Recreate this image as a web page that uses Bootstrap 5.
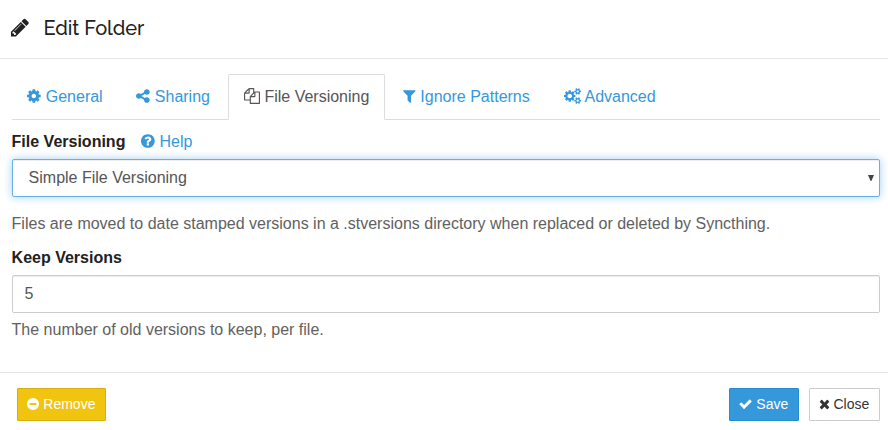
<!DOCTYPE html>
<html lang="en">
<head>
<meta charset="utf-8">
<meta name="viewport" content="width=device-width, initial-scale=1">
<title>Edit Folder</title>
<link href="https://cdn.jsdelivr.net/npm/bootstrap@5.3.0/dist/css/bootstrap.min.css" rel="stylesheet">
<style>
body{font:16px/22px "Liberation Sans",Arial,sans-serif;color:#212121;background:#fff;overflow:hidden}
.ico{height:1em;width:auto;vertical-align:-.143em;fill:currentColor;overflow:visible}
.dialog-head{height:59px;border-bottom:1px solid #e5e5e5;padding:0 12px 3px 11px}
.dialog-head h1{font:500 20px/24px Raleway,Lato,sans-serif;letter-spacing:-.08px;margin:0 0 0 14.5px}
.dialog-head .ico{font-size:21px}
.dialog-main{height:313px;padding:15px 8px 0 11.6px}
.nav-tabs{--bs-nav-tabs-border-color:#ddd;margin-bottom:11px;gap:2px}
.nav-tabs .nav-link{padding:11px 15px;line-height:22px;color:#3498db;border-radius:2px 2px 0 0;white-space:nowrap}
.nav-tabs .nav-link.active{color:#555;border-color:#ddd #ddd #fff}
.nav-tabs .ico-snug{margin-left:-.2px;margin-right:.2px}
.field-label{font-weight:700;line-height:22px}
.field-row{margin-bottom:6px}
.help-link{color:#3498db;margin-left:16px}
.form-select,.form-control{height:38px;border:1px solid #ccc;border-radius:2px;color:#555;font-size:16px;line-height:22px;padding:7px 12px;box-shadow:inset 0 1px 1px rgba(0,0,0,.075)}
.form-select{padding-left:16px;border-color:#66afe9;box-shadow:inset 0 1px 1px rgba(0,0,0,.075),0 0 8px rgba(102,175,233,.6);background-image:url("data:image/svg+xml,%3Csvg xmlns='http://www.w3.org/2000/svg' viewBox='0 0 6 6'%3E%3Cpath fill='%23444' d='M0 0h6L3.4 6h-.8z'/%3E%3C/svg%3E");background-size:6px 6px;background-position:right 5px center}
.form-select:focus{border-color:#66afe9}
.hint{color:#616161}
.keep-label{margin:12px 0 6px}
.keep-hint{margin:6px 0 0}
.dialog-foot{height:58px;border-top:1px solid #e5e5e5;padding:15px 8px 0 17px}
.btn{height:33px;border-radius:1px;font-size:14px;line-height:21px;padding:5px 9px;white-space:nowrap}
.btn-remove,.btn-remove:hover{background:#f1c40f;border-color:#d8b00d;color:#fff;padding-left:9.4px;padding-right:10px}
.btn-save,.btn-save:hover{background:#3498db;border-color:#258cd1;color:#fff;padding-left:9.5px;padding-right:9.7px}
.btn-dismiss,.btn-dismiss:hover{background:#fff;border-color:#ccc;color:#333;margin-left:10px;padding-left:8.6px;padding-right:9.8px}
</style>
<script src="https://cdn.jsdelivr.net/npm/bootstrap@5.3.0/dist/js/bootstrap.bundle.min.js"></script>
</head>
<body>
<header class="dialog-head d-flex align-items-center">
<svg class="ico" viewBox="128 0 1536 1792"><path d="M491 1536l91-91-235-235-91 91v107h128v128h107zm523-928q0-22-22-22-10 0-17 7l-542 542q-7 7-7 17 0 22 22 22 10 0 17-7l542-542q7-7 7-17zm-54-192l416 416-832 832h-416v-416zm683 96q0 53-37 90l-166 166-416-416 166-165q36-38 90-38 53 0 91 38l235 234q37 39 37 91z"/></svg>
<h1>Edit Folder</h1>
</header>
<main class="dialog-main">
<ul class="nav nav-tabs flex-nowrap">
<li class="nav-item"><a class="nav-link" href="#"><svg class="ico ico-snug" viewBox="128 0 1536 1792"><path d="M1152 896q0-106-75-181t-181-75-181 75-75 181 75 181 181 75 181-75 75-181zm512-109v222q0 12-8 23t-20 13l-185 28q-19 54-39 91 35 50 107 138 10 12 10 25t-9 23q-27 37-99 108t-94 71q-12 0-26-9l-138-108q-44 23-91 38-16 136-29 186-7 28-36 28h-222q-14 0-24.5-8.5t-11.5-21.5l-28-184q-49-16-90-37l-141 107q-10 9-25 9-14 0-25-11-126-114-165-168-7-10-7-23 0-12 8-23 15-21 51-66.5t54-70.5q-27-50-41-99l-183-27q-13-2-21-12.5t-8-23.5v-222q0-12 8-23t19-13l186-28q14-46 39-92-40-57-107-138-10-12-10-24 0-10 9-23 26-36 98.5-107.5t94.5-71.5q13 0 26 10l138 107q44-23 91-38 16-136 29-186 7-28 36-28h222q14 0 24.5 8.5t11.5 21.5l28 184q49 16 90 37l142-107q9-9 24-9 13 0 25 10 129 119 165 170 7 8 7 22 0 12-8 23-15 21-51 66.5t-54 70.5q26 50 41 98l183 28q13 2 21 12.5t8 23.5z"/></svg> General</a></li>
<li class="nav-item"><a class="nav-link" href="#"><svg class="ico ico-snug" viewBox="128 0 1536 1792"><path d="M1344 1024q133 0 226.5 93.5t93.5 226.5-93.5 226.5-226.5 93.5-226.5-93.5-93.5-226.5q0-12 2-34l-360-180q-92 86-218 86-133 0-226.5-93.5t-93.5-226.5 93.5-226.5 226.5-93.5q126 0 218 86l360-180q-2-22-2-34 0-133 93.5-226.5t226.5-93.5 226.5 93.5 93.5 226.5-93.5 226.5-226.5 93.5q-126 0-218-86l-360 180q2 22 2 34t-2 34l360 180q92-86 218-86z"/></svg> Sharing</a></li>
<li class="nav-item"><a class="nav-link active" href="#"><svg class="ico" viewBox="0 0 1792 1792"><path d="M1696 384q40 0 68 28t28 68v1216q0 40-28 68t-68 28h-960q-40 0-68-28t-28-68v-288h-544q-40 0-68-28t-28-68v-672q0-40 20-88t48-76l408-408q28-28 76-48t88-20h416q40 0 68 28t28 68v328q68-40 128-40h416zm-544 213l-299 299h299v-299zm-640-384l-299 299h299v-299zm196 647l316-316v-416h-384v416q0 40-28 68t-68 28h-416v640h512v-256q0-40 20-88t48-76zm956 804v-1152h-384v416q0 40-28 68t-68 28h-416v640h896z"/></svg> File Versioning</a></li>
<li class="nav-item"><a class="nav-link" href="#"><svg class="ico" viewBox="192 0 1408 1792"><path d="M1595 295q17 41-14 70l-493 493v742q0 42-39 59-13 5-25 5-27 0-45-19l-256-256q-19-19-19-45v-486l-493-493q-31-29-14-70 17-39 59-39h1280q42 0 59 39z"/></svg> Ignore Patterns</a></li>
<li class="nav-item"><a class="nav-link" href="#"><svg class="ico" viewBox="-64 0 1920 1792"><path d="M832 896q0-106-75-181t-181-75-181 75-75 181 75 181 181 75 181-75 75-181zm768 512q0-52-38-90t-90-38-90 38-38 90q0 53 37.5 90.5t90.5 37.5 90.5-37.5 37.5-90.5zm0-1024q0-52-38-90t-90-38-90 38-38 90q0 53 37.5 90.5t90.5 37.5 90.5-37.5 37.5-90.5zm-384 421v185q0 10-7 19.5t-16 10.5l-155 24q-11 35-32 76 34 48 90 115 7 11 7 20 0 12-7 19-23 30-82.5 89.5t-78.5 59.5q-11 0-21-7l-115-90q-37 19-77 31-11 108-23 155-7 24-30 24h-186q-11 0-20-7.5t-10-17.5l-23-153q-34-10-75-31l-118 89q-7 7-20 7-11 0-21-8-144-133-144-160 0-9 7-19 10-14 41-53t47-61q-23-44-35-82l-152-24q-10-1-17-9.5t-7-19.5v-185q0-10 7-19.5t16-10.5l155-24q11-35 32-76-34-48-90-115-7-11-7-20 0-12 7-20 22-30 82-89t79-59q11 0 21 7l115 90q34-18 77-32 11-108 23-154 7-24 30-24h186q11 0 20 7.5t10 17.5l23 153q34 10 75 31l118-89q8-7 20-7 11 0 21 8 144 133 144 160 0 8-7 19-12 16-42 54t-45 60q23 48 34 82l152 23q10 2 17 10.5t7 19.5zm640 533v140q0 16-149 31-12 27-30 52 51 113 51 138 0 4-4 7-122 71-124 71-8 0-46-47t-52-68q-20 2-30 2t-30-2q-14 21-52 68t-46 47q-2 0-124-71-4-3-4-7 0-25 51-138-18-25-30-52-149-15-149-31v-140q0-16 149-31 13-29 30-52-51-113-51-138 0-4 4-7 4-2 35-20t59-34 30-16q8 0 46 46.5t52 67.5q20-2 30-2t30 2q51-71 92-112l6-2q4 0 124 70 4 3 4 7 0 25-51 138 17 23 30 52 149 15 149 31zm0-1024v140q0 16-149 31-12 27-30 52 51 113 51 138 0 4-4 7-122 71-124 71-8 0-46-47t-52-68q-20 2-30 2t-30-2q-14 21-52 68t-46 47q-2 0-124-71-4-3-4-7 0-25 51-138-18-25-30-52-149-15-149-31v-140q0-16 149-31 13-29 30-52-51-113-51-138 0-4 4-7 4-2 35-20t59-34 30-16q8 0 46 46.5t52 67.5q20-2 30-2t30 2q51-71 92-112l6-2q4 0 124 70 4 3 4 7 0 25-51 138 17 23 30 52 149 15 149 31z"/></svg> Advanced</a></li>
</ul>
<div class="d-flex field-row">
<label class="field-label" for="kind">File Versioning</label>
<a class="help-link text-decoration-none" href="#"><svg class="ico" viewBox="128 0 1536 1792"><path d="M1024 1376v-192q0-14-9-23t-23-9h-192q-14 0-23 9t-9 23v192q0 14 9 23t23 9h192q14 0 23-9t9-23zm256-672q0-88-55.5-163t-138.5-116-170-41q-243 0-371 213-15 24 8 42l132 100q7 6 19 6 16 0 25-12 53-68 86-92 34-24 86-24 48 0 85.5 26t37.5 59q0 38-20 61t-68 45q-63 28-115.5 86.5t-52.5 125.5v36q0 14 9 23t23 9h192q14 0 23-9t9-23q0-19 21.5-49.5t54.5-49.5q32-18 49-28.5t46-35 44.5-48 28-60.5 12.5-81zm384 192q0 209-103 385.5t-279.5 279.5-385.5 103-385.5-103-279.5-279.5-103-385.5 103-385.5 279.5-279.5 385.5-103 385.5 103 279.5 279.5 103 385.5z"/></svg> Help</a>
</div>
<select class="form-select" id="kind"><option>Simple File Versioning</option></select>
<p class="hint mt-3 mb-0">Files are moved to date stamped versions in a .stversions directory when replaced or deleted by Syncthing.</p>
<label class="field-label keep-label d-block" for="keep">Keep Versions</label>
<input class="form-control" id="keep" type="text" value="5">
<p class="hint keep-hint">The number of old versions to keep, per file.</p>
</main>
<footer class="dialog-foot d-flex">
<button class="btn btn-remove me-auto" type="button"><svg class="ico" viewBox="128 0 1536 1792"><path d="M1344 960v-128q0-26-19-45t-45-19h-768q-26 0-45 19t-19 45v128q0 26 19 45t45 19h768q26 0 45-19t19-45zm320-64q0 209-103 385.5t-279.5 279.5-385.5 103-385.5-103-279.5-279.5-103-385.5 103-385.5 279.5-279.5 385.5-103 385.5 103 279.5 279.5 103 385.5z"/></svg> Remove</button>
<button class="btn btn-save" type="button"><svg class="ico" viewBox="64 0 1664 1792"><path d="M1671 566q0 40-28 68l-724 724-136 136q-28 28-68 28t-68-28l-136-136-362-362q-28-28-28-68t28-68l136-136q28-28 68-28t68 28l294 295 656-657q28-28 68-28t68 28l136 136q28 28 28 68z"/></svg> Save</button>
<button class="btn btn-dismiss" type="button"><svg class="ico" viewBox="192 0 1408 1792"><path d="M1490 1322q0 40-28 68l-136 136q-28 28-68 28t-68-28l-294-294-294 294q-28 28-68 28t-68-28l-136-136q-28-28-28-68t28-68l294-294-294-294q-28-28-28-68t28-68l136-136q28-28 68-28t68 28l294 294 294-294q28-28 68-28t68 28l136 136q28 28 28 68t-28 68l-294 294 294 294q28 28 28 68z"/></svg> Close</button>
</footer>
</body>
</html>
